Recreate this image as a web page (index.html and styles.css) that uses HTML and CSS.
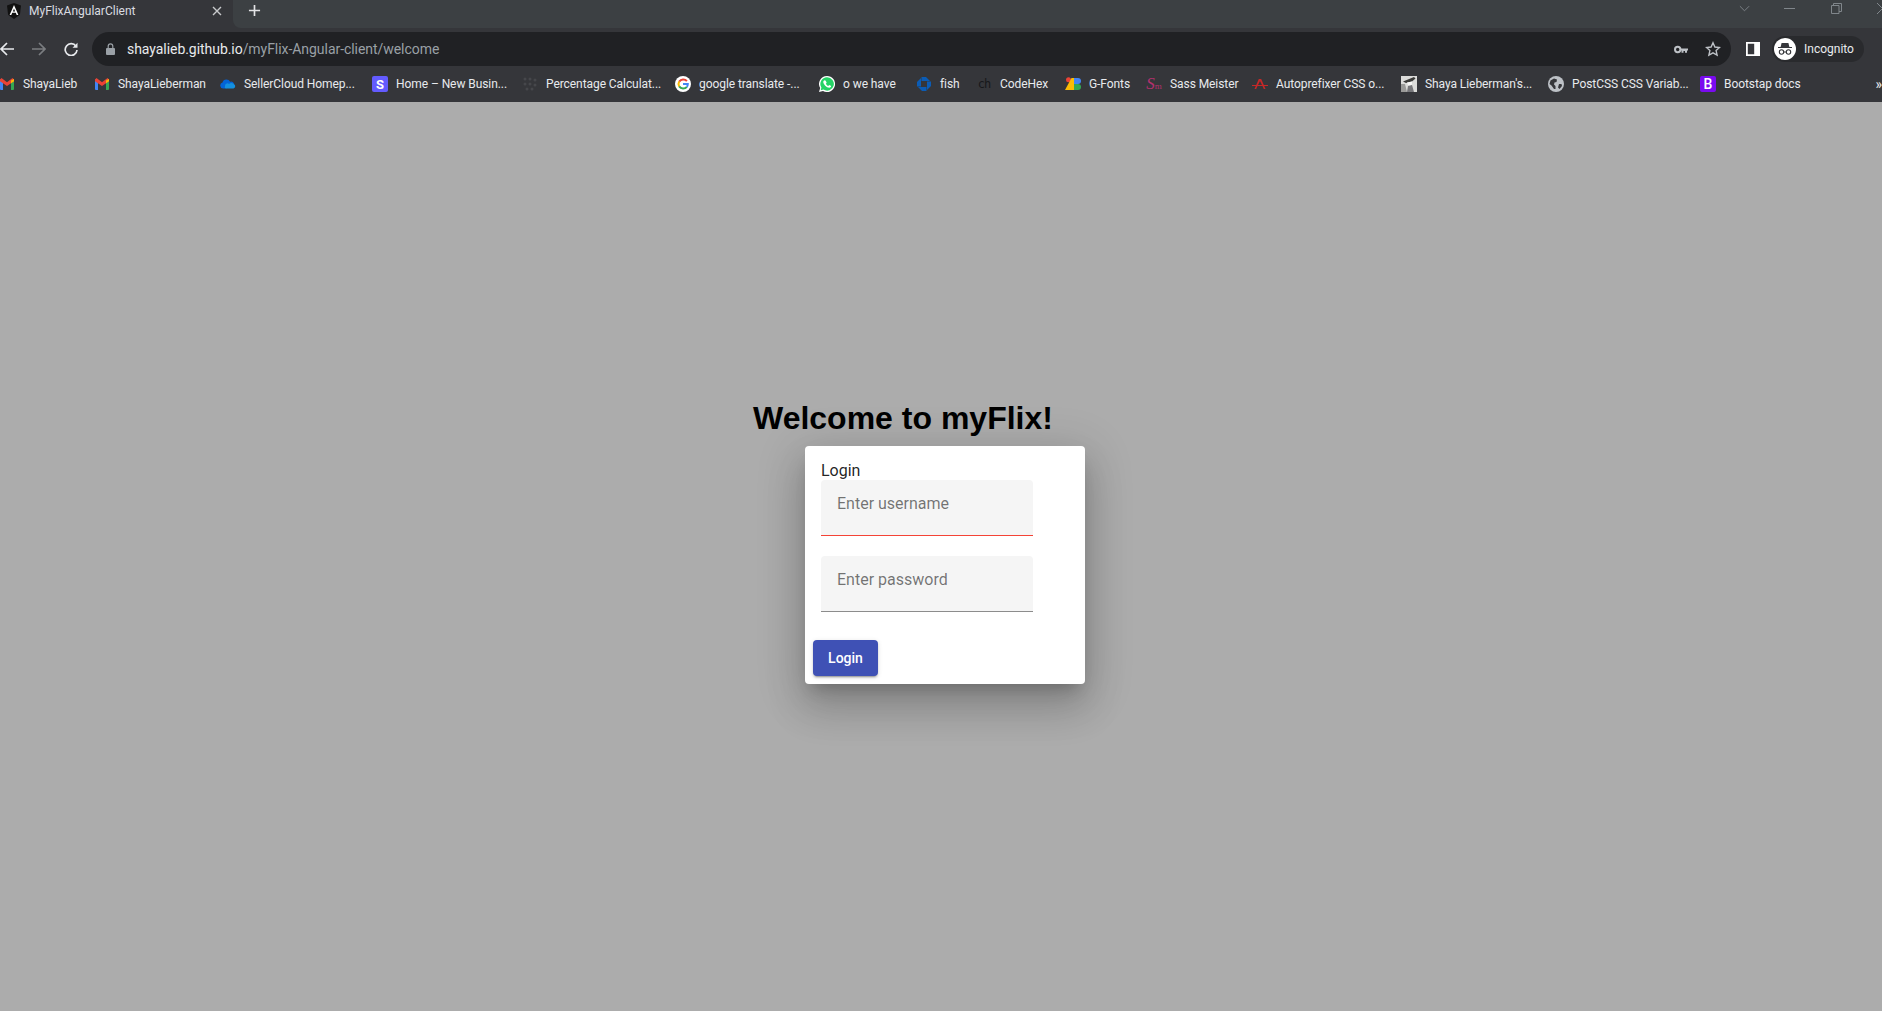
FILE: index.html
```html
<!doctype html>
<html>
<head>
<meta charset="UTF-8">
<title>MyFlixAngularClient</title>
<link rel="stylesheet" href="styles.css">
</head>
<body>
	<div class="browser">
		<div class="tabstrip">
			<div class="tab">
				<svg class="favicon" viewBox="0 0 16 16"><path fill="#111" d="M8 0 1 2.500l1.100 9.300L8 16l5.900-4.200L15 2.500z"/><path fill="#fff" d="M8 2 3.600 12h1.700l.9-2.300h3.600l.9 2.300h1.700zm0 3.700 1.200 2.700H6.800z"/></svg>
				<span class="tab_title">MyFlixAngularClient</span>
				<svg class="tab_close" viewBox="0 0 10 10"><path stroke="#c8cacc" stroke-width="1.400" d="M1 1l8 8M9 1l-8 8"/></svg>
			</div>
			<div class="tab_rest">
				<svg class="newtab" viewBox="0 0 14 14"><path stroke="#e3e4e6" stroke-width="1.800" d="M7 1v12M1 7h12"/></svg>
				<div class="window_controls">
					<svg class="ctl ctl_chevron" viewBox="0 0 12 7"><path fill="none" stroke="#80868b" d="M1 1l5 5 5-5"/></svg>
					<svg class="ctl ctl_min" viewBox="0 0 11 2"><path stroke="#80868b" d="M0 1h11"/></svg>
					<svg class="ctl ctl_restore" viewBox="0 0 11 11"><path fill="none" stroke="#80868b" d="M.5 2.500h7.500v8H.5zM2.500 2.500V.5h8v8H8"/></svg>
					<svg class="ctl ctl_close" viewBox="0 0 11 11"><path stroke="#80868b" d="M0 0l11 11M11 0 0 11"/></svg>
				</div>
			</div>
		</div>

		<div class="toolbar">
			<div class="nav_buttons">
				<svg class="nav" viewBox="0 0 14 14"><path fill="none" stroke="#e8eaed" stroke-width="1.700" d="M14 7H1.500M7 1 1 7l6 6"/></svg>
				<svg class="nav" viewBox="0 0 14 14"><path fill="none" stroke="#7b7d80" stroke-width="1.700" d="M0 7h12.500M7 1l6 6-6 6"/></svg>
				<svg class="nav" viewBox="0 0 14 14"><path fill="none" stroke="#e8eaed" stroke-width="1.700" d="M12 4.300A5.900 5.900 0 1 0 13 8"/><path fill="#e8eaed" d="M13.500.8v5h-5z"/></svg>
			</div>
			<div class="urlbar">
				<svg class="lock" viewBox="0 0 9 12"><path fill="#9aa0a6" d="M1 5h7a1 1 0 0 1 1 1v5a1 1 0 0 1-1 1H1a1 1 0 0 1-1-1V6a1 1 0 0 1 1-1z"/><path fill="none" stroke="#9aa0a6" stroke-width="1.200" d="M2.200 5V3.200a2.300 2.300 0 0 1 4.600 0V5"/></svg>
				<span class="url"><span class="url_host">shayalieb.github.io</span><span class="url_path">/myFlix-Angular-client/welcome</span></span>
				<svg class="key" viewBox="0 0 14 9"><circle cx="3.700" cy="4.500" r="2.700" fill="none" stroke="#bdc1c6" stroke-width="2"/><path fill="#bdc1c6" d="M6 3.500h8v2h-1v2.200h-2V5.900H9.500v1.800h-2V5.500H6z"/></svg>
				<svg class="star" viewBox="0 0 16 16"><path fill="none" stroke="#bdc1c6" stroke-width="1.400" d="m8 1.800 1.900 4.200 4.600.5-3.400 3.100 1 4.500L8 11.800l-4.100 2.300 1-4.500-3.400-3.100 4.600-.5z"/></svg>
			</div>
			<svg class="panel" viewBox="0 0 14 14"><path fill="#fff" fill-rule="evenodd" d="M0 0h14v14H0zm1.800 1.800v10.400h6.400V1.800z"/></svg>
			<div class="profile">
				<svg class="avatar" viewBox="0 0 22 22"><circle cx="11" cy="11" r="11" fill="#fff"/><path fill="#35363a" d="M7.600 5h6.800l1 4H18v1H4V9h2.600z"/><circle cx="7.500" cy="14" r="2.200" fill="none" stroke="#35363a" stroke-width="1.100"/><circle cx="14.500" cy="14" r="2.200" fill="none" stroke="#35363a" stroke-width="1.100"/><path stroke="#35363a" d="M9.700 14h2.600"/></svg>
				<span>Incognito</span>
			</div>
		</div>

		<div class="bookmarks">
			<div class="bookmark">
				<svg class="favicon" viewBox="0 0 16 16"><path fill="#4285f4" d="M1 3.500h3V14H2a1 1 0 0 1-1-1z"/><path fill="#34a853" d="M12 3.500h3V13a1 1 0 0 1-1 1h-2z"/><path fill="#ea4335" d="M1 3.500 2.500 2 8 6.200 13.500 2 15 3.500v1.700L8 10 1 5.200z"/><path fill="#fbbc04" d="M12 4.600 15 3v2.200L12 7.300z"/></svg>
				<span>ShayaLieb</span>
			</div>
			<div class="bookmark">
				<svg class="favicon" viewBox="0 0 16 16"><path fill="#4285f4" d="M1 3.500h3V14H2a1 1 0 0 1-1-1z"/><path fill="#34a853" d="M12 3.500h3V13a1 1 0 0 1-1 1h-2z"/><path fill="#ea4335" d="M1 3.500 2.500 2 8 6.200 13.500 2 15 3.500v1.700L8 10 1 5.200z"/><path fill="#fbbc04" d="M12 4.600 15 3v2.200L12 7.300z"/></svg>
				<span>ShayaLieberman</span>
			</div>
			<div class="bookmark">
				<svg class="favicon" viewBox="0 0 16 16"><path fill="#0364d8" d="M6.500 3.500a4 4 0 0 1 3.600 2.300 3 3 0 0 1 4 2.500L6 12.500H3.300A3 3 0 0 1 2.500 6.600a4 4 0 0 1 4-3.100z"/><path fill="#1490df" d="M6 12.500h7.500a2.300 2.300 0 0 0 .6-4.200A3.400 3.400 0 0 0 9 7.900 2.500 2.500 0 0 0 5 10.300a1.500 1.500 0 0 0 1 2.200z"/></svg>
				<span>SellerCloud Homep...</span>
			</div>
			<div class="bookmark">
				<span class="favicon letter_icon letter_s">S</span>
				<span>Home – New Busin...</span>
			</div>
			<div class="bookmark">
				<svg class="favicon" viewBox="0 0 16 16"><g fill="#46474b"><circle cx="3" cy="3" r="1.500"/><circle cx="8" cy="3" r="1.500"/><circle cx="13" cy="4" r="1.500"/><circle cx="3" cy="8" r="1.500"/><circle cx="8" cy="8" r="1.500"/><circle cx="13" cy="9" r="1.500"/><circle cx="5" cy="13" r="1.500"/><circle cx="10" cy="13" r="1.500"/></g></svg>
				<span>Percentage Calculat...</span>
			</div>
			<div class="bookmark">
				<svg class="favicon" viewBox="0 0 16 16"><circle cx="8" cy="8" r="8" fill="#fff"/><path fill="none" stroke="#ea4335" stroke-width="2" d="M11.900 5.200A4.800 4.800 0 0 0 4.200 5.600"/><path fill="none" stroke="#fbbc04" stroke-width="2" d="M4.200 5.600a4.800 4.800 0 0 0 0 4.800"/><path fill="none" stroke="#34a853" stroke-width="2" d="M4.200 10.400a4.800 4.800 0 0 0 7.700.4"/><path fill="none" stroke="#4285f4" stroke-width="2" d="M11.900 10.800a4.800 4.800 0 0 0 .9-2.800H8"/></svg>
				<span>google translate -...</span>
			</div>
			<div class="bookmark">
				<svg class="favicon" viewBox="0 0 16 16"><path fill="#fff" d="M8 0a8 8 0 0 0-6.800 12.100L0 16l4-1.100A8 8 0 1 0 8 0z"/><path fill="#25d366" d="M8 1.300a6.700 6.700 0 0 0-5.600 10.300l-.7 2.700 2.800-.7A6.700 6.700 0 1 0 8 1.300z"/><path fill="#fff" d="M5.600 4.200c-.5 0-1.300.7-1.300 1.900 0 2.300 3.200 5.700 5.900 5.700 1.100 0 1.900-.9 1.900-1.500 0-.4-1.600-1.200-1.900-1.200-.3 0-.7.900-1 .9-.6 0-2.300-1.600-2.300-2.200 0-.3.700-.7.700-1 0-.4-.7-2.600-2-2.600z"/></svg>
				<span>o we have</span>
			</div>
			<div class="bookmark">
				<svg class="favicon" viewBox="0 0 16 16"><path fill="#0b5cb5" d="M5.500 1H10l4 4H5.500zM15 5.500V10l-4 4V5.500zM10.500 15H6l-4-4h8.500zM1 10.500V6l4-4v8.500z"/></svg>
				<span>fish</span>
			</div>
			<div class="bookmark">
				<span class="favicon letter_icon letter_ch">ch</span>
				<span>CodeHex</span>
			</div>
			<div class="bookmark">
				<svg class="favicon" viewBox="0 0 16 16"><circle cx="3.500" cy="3.800" r="2.500" fill="#ea4335"/><path fill="#fbbc04" d="M0 14 6.500 2H9v12z"/><path fill="#4285f4" d="M9 2h4a3 3 0 0 1 0 6H9z"/><path fill="#34a853" d="M9 8h4a3 3 0 0 1 0 6H9z"/></svg>
				<span>G-Fonts</span>
			</div>
			<div class="bookmark">
				<span class="favicon letter_icon letter_sm">S<small>m</small></span>
				<span>Sass Meister</span>
			</div>
			<div class="bookmark">
				<svg class="favicon" viewBox="0 0 16 16"><path fill="#c62828" d="M6.800 3h2.400l2.600 6H16v1h-3.800l1.300 3h-1.700L10.500 10h-5L4.200 13H2.500l1.300-3H0V9h4.200zM8 5 6 9h4z"/></svg>
				<span>Autoprefixer CSS o...</span>
			</div>
			<div class="bookmark">
				<svg class="favicon" viewBox="0 0 16 16"><rect width="16" height="16" fill="#dcdcda"/><path fill="#9a9a98" d="M0 8h4l2 8H0z"/><path fill="#3a3a38" d="M2 5.500 13 1l1.500 1.500L11 5.500l-6 1.500z"/><path fill="#f7f7f5" d="M6 6.500l5-1v3L9 10 7 9z"/><path fill="#77777a" d="M7 10l4-1 2 7H6z"/></svg>
				<span>Shaya Lieberman's...</span>
			</div>
			<div class="bookmark">
				<svg class="favicon" viewBox="0 0 16 16"><circle cx="8" cy="8" r="8" fill="#bdc1c6"/><path fill="#35363a" d="M2.500 4.500 6 2.500l3 1-.5 2.500-2 .5-.5 2 1.500 1.500V13H6L3.500 9.500 1.500 8zM11 8h2.500l.5 2-2.500 3L10 11.500z"/></svg>
				<span>PostCSS CSS Variab...</span>
			</div>
			<div class="bookmark">
				<span class="favicon letter_icon letter_b">B</span>
				<span>Bootstap docs</span>
			</div>
			<span class="bookmark_more">»</span>
		</div>
	</div>

	<div class="page">
		<h1 class="welcome">Welcome to myFlix!</h1>
		<div class="dialog">
			<div class="dialog_title">Login</div>
			<div class="field field_invalid"><span class="field_label">Enter username</span></div>
			<div class="field"><span class="field_label">Enter password</span></div>
			<button type="button" class="login_btn">Login</button>
		</div>
	</div>
</body>
</html>
```

FILE: styles.css
```css
* {
	box-sizing: border-box;
}
body {
	margin: 0;
	height: 1011px;
	overflow: hidden;
	display: flex;
	flex-direction: column;
	font-family: Roboto, "Liberation Sans", sans-serif;
	background-color: #acacac;
}
.browser {
	height: 102px;
	background-color: #35363a;
	color: #e8eaed;
	font-size: 12px;
}
.favicon {
	width: 16px;
	height: 16px;
	flex: none;
}

/* tabs */
.tabstrip {
	display: flex;
	height: 28px;
}
.tab {
	width: 233px;
	display: flex;
	align-items: center;
	padding-left: 6px;
	padding-bottom: 7px;
}
.tab_title {
	margin-left: 7px;
	color: #dadce0;
	flex: 1;
}
.tab_close {
	width: 10px;
	height: 10px;
	margin-right: 11px;
}
.tab_rest {
	flex: 1;
	display: flex;
	align-items: center;
	background-color: #3c4043;
	border-bottom-left-radius: 8px;
	padding-left: 15px;
	padding-bottom: 7px;
}
.newtab {
	width: 13px;
	height: 13px;
}
.window_controls {
	margin-left: auto;
	display: flex;
	align-items: center;
	height: 16px;
	margin-bottom: 5px;
	overflow: hidden;
}
.ctl {
	flex: none;
	width: 11px;
	height: 11px;
}
.ctl_chevron {
	margin-right: 34px;
}
.ctl_min {
	margin-right: 36px;
}
.ctl_restore {
	margin-right: 35px;
}
.ctl_close {
	margin-right: -6px;
}

/* toolbar */
.toolbar {
	display: flex;
	align-items: center;
	height: 38px;
	padding-top: 4px;
}
.nav_buttons {
	display: flex;
	gap: 18px;
	width: 92px;
}
.nav {
	width: 14px;
	height: 14px;
}
.urlbar {
	width: 1639px;
	height: 34px;
	display: flex;
	align-items: center;
	background-color: #202124;
	border-radius: 17px;
	padding-left: 14px;
	padding-right: 10px;
}
.lock {
	width: 9px;
	height: 12px;
}
.url {
	margin-left: 12px;
	font-size: 14px;
	letter-spacing: -0.05px;
	flex: 1;
}
.url_host {
	color: #e8eaed;
}
.url_path {
	color: #9aa0a6;
}
.key {
	width: 14px;
	height: 9px;
	margin-right: 17px;
}
.star {
	width: 16px;
	height: 16px;
}
.panel {
	width: 14px;
	height: 14px;
	margin-left: 15px;
}
.profile {
	width: 92px;
	height: 26px;
	margin-left: 12px;
	display: flex;
	align-items: center;
	gap: 8px;
	padding-left: 2px;
	background-color: #292a2d;
	border-radius: 13px;
	font-size: 12px;
}
.avatar {
	width: 22px;
	height: 22px;
}

/* bookmarks */
.bookmarks {
	display: grid;
	grid-template-columns: 95px 126px 152px 150px 153px 144px 97px 60px 89px 81px 106px 149px 147px 152px 170px 1fr;
	align-items: center;
	height: 36px;
	margin-left: -1px;
	white-space: nowrap;
}
.bookmark {
	display: flex;
	align-items: center;
	gap: 8px;
	color: #e8eaed;
	letter-spacing: -0.07px;
}
.bookmark_more {
	justify-self: end;
	font-size: 14px;
}
.letter_icon {
	display: flex;
	align-items: center;
	justify-content: center;
	border-radius: 2px;
	letter-spacing: 0;
}
.letter_s {
	background-color: #635bff;
	color: #fff;
	font-size: 13px;
	font-weight: bold;
}
.letter_b {
	background-color: #7a0bf0;
	color: #fff;
	font-size: 14px;
	font-weight: 500;
}
.letter_ch {
	color: #17181a;
	font-family: "DejaVu Sans Mono", monospace;
	font-size: 12px;
	letter-spacing: -1px;
}
.letter_sm {
	color: #b3306e;
	font-family: "Liberation Serif", serif;
	font-style: italic;
	font-size: 17px;
}
.letter_sm small {
	font-size: 9px;
	font-style: normal;
	margin-top: 4px;
}

/* page */
.page {
	flex: 1;
	padding-top: 298px;
}
.welcome {
	margin: 0 0 0 753px;
	height: 46px;
	font-family: "Liberation Sans", Arial, sans-serif;
	font-size: 32px;
	font-weight: bold;
	line-height: 37px;
	color: #000;
}
.dialog {
	margin-left: 805px;
	width: 280px;
	height: 238px;
	padding: 16px 16px 0;
	background-color: #fff;
	border-radius: 4px;
	box-shadow: 0 11px 15px -7px rgba(0, 0, 0, 0.2), 0 24px 38px 3px rgba(0, 0, 0, 0.14), 0 9px 46px 8px rgba(0, 0, 0, 0.12);
}
.dialog_title {
	height: 18px;
	font-size: 16px;
	line-height: 18px;
	color: rgba(0, 0, 0, 0.87);
}
.field {
	width: 212px;
	height: 56px;
	margin-bottom: 20px;
	padding: 12px 16px 0;
	background-color: #f5f5f5;
	border-radius: 4px 4px 0 0;
	border-bottom: 1px solid #8c8c8c;
}
.field_invalid {
	border-bottom-color: #f44336;
}
.field_label {
	display: block;
	font-size: 16px;
	line-height: 24px;
	color: rgba(0, 0, 0, 0.54);
}
.login_btn {
	display: block;
	margin: 28px 0 0 -8px;
	width: 65px;
	height: 36px;
	border: 0;
	border-radius: 4px;
	background-color: #3f51b5;
	color: #fff;
	font-family: Roboto, sans-serif;
	font-size: 14px;
	font-weight: 500;
	box-shadow: 0 3px 1px -2px rgba(0, 0, 0, 0.2), 0 2px 2px 0 rgba(0, 0, 0, 0.14), 0 1px 5px 0 rgba(0, 0, 0, 0.12);
}
```
